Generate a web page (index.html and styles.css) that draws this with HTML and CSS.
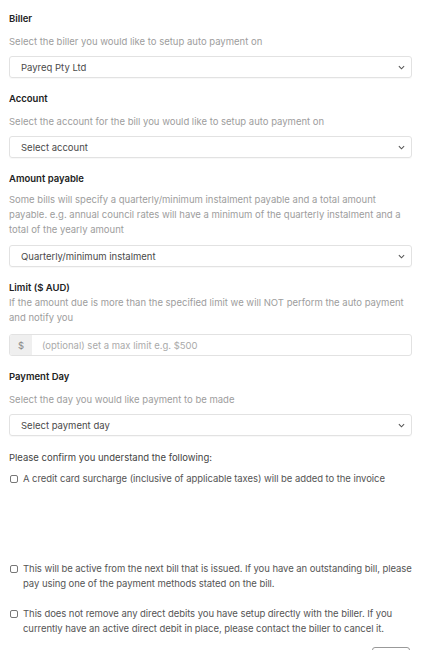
FILE: index.html
```html
<!DOCTYPE html>
<html>
<head>
<meta charset="utf-8">
<link rel="stylesheet" href="styles.css">
</head>
<body>
<form class="form">
  <div class="field">
    <div class="label">Biller</div>
    <div class="desc">Select the biller you would like to setup auto payment on</div>
    <div class="select"><span>Payreq Pty Ltd</span><svg class="chev" viewBox="0 0 8 5" width="7" height="5"><path d="M1 1l3 3 3-3" fill="none" stroke="#555" stroke-width="1.2"/></svg></div>
  </div>
  <div class="field">
    <div class="label">Account</div>
    <div class="desc">Select the account for the bill you would like to setup auto payment on</div>
    <div class="select"><span>Select account</span><svg class="chev" viewBox="0 0 8 5" width="7" height="5"><path d="M1 1l3 3 3-3" fill="none" stroke="#555" stroke-width="1.2"/></svg></div>
  </div>
  <div class="field">
    <div class="label">Amount payable</div>
    <div class="desc">Some bills will specify a quarterly/minimum instalment payable and a total amount payable. e.g. annual council rates will have a minimum of the quarterly instalment and a total of the yearly amount</div>
    <div class="select"><span>Quarterly/minimum instalment</span><svg class="chev" viewBox="0 0 8 5" width="7" height="5"><path d="M1 1l3 3 3-3" fill="none" stroke="#555" stroke-width="1.2"/></svg></div>
  </div>
  <div class="field">
    <div class="label">Limit ($ AUD)</div>
    <div class="desc tight">If the amount due is more than the specified limit we will NOT perform the auto payment and notify you</div>
    <div class="input-group"><span class="addon">$</span><span class="input placeholder">(optional) set a max limit e.g. $500</span></div>
  </div>
  <div class="field">
    <div class="label">Payment Day</div>
    <div class="desc">Select the day you would like payment to be made</div>
    <div class="select"><span>Select payment day</span><svg class="chev" viewBox="0 0 8 5" width="7" height="5"><path d="M1 1l3 3 3-3" fill="none" stroke="#555" stroke-width="1.2"/></svg></div>
  </div>
  <div class="confirm">Please confirm you understand the following:</div>
  <label class="check first"><span class="box"></span><span>A credit card surcharge (inclusive of applicable taxes) will be added to the invoice</span></label>
  <div class="spacer"></div>
  <label class="check"><span class="box"></span><span>This will be active from the next bill that is issued. If you have an outstanding bill, please pay using one of the payment methods stated on the bill.</span></label>
  <label class="check"><span class="box"></span><span>This does not remove any direct debits you have setup directly with the biller. If you currently have an active direct debit in place, please contact the biller to cancel it.</span></label>
  <div class="actions"><span class="btn"></span></div>
</form>
</body>
</html>
```
FILE: styles.css
```css
* { box-sizing: border-box; }
html, body { margin: 0; padding: 0; background: #fff; }
body {
  font-family: Inter, "Noto Sans", "Liberation Sans", sans-serif;
  font-size: 9.5px;
  color: #333;
  letter-spacing: 0;
}
.form {
  padding: 11px 18px 0 9px;
  width: 430px;
}
.field { margin-bottom: 13px; }
.label {
  font-weight: 600;
  color: #222;
  line-height: 15px;
  margin-bottom: 8px;
}
.desc {
  color: #9d9d9d;
  line-height: 15px;
  margin-bottom: 7px;
}
.field:nth-child(3) .label { margin-bottom: 6px; }
.field:nth-child(3) .desc { margin-bottom: 8px; }
.desc.tight { margin-bottom: 9px; }
.field:nth-child(4) .label { margin-bottom: 0; }
.select {
  height: 22px;
  border: 1px solid #e2e2e2;
  border-radius: 3px;
  display: flex;
  align-items: center;
  justify-content: space-between;
  padding: 0 6px 0 11px;
  color: #4a4a4a;
  box-shadow: 0 1px 1px rgba(0,0,0,0.03);
}
.chev { display: block; }
.input-group {
  height: 22px;
  display: flex;
  border: 1px solid #e2e2e2;
  border-radius: 3px;
  overflow: hidden;
}
.addon {
  width: 22px;
  background: #efefef;
  color: #888;
  display: flex;
  align-items: center;
  justify-content: center;
}
.input {
  flex: 1;
  display: flex;
  align-items: center;
  padding-left: 10px;
}
.placeholder { color: #aaa; }
.confirm {
  line-height: 15px;
  color: #444;
  margin-top: 14px;
  margin-bottom: 6px;
}
.check {
  display: flex;
  gap: 5px;
  line-height: 15px;
  color: #555;
  margin-bottom: 15px;
  padding-left: 1px;
  letter-spacing: -0.06px;
}
.check.first { margin-bottom: 0; }
.box {
  flex: none;
  width: 8px;
  height: 8px;
  border: 1px solid #777;
  border-radius: 2px;
  margin-top: 3.5px;
}
.spacer { height: 75px; }
.actions {
  display: flex;
  justify-content: flex-end;
  padding-right: 2px;
  margin-top: -4px;
}
.btn {
  width: 38px;
  height: 20px;
  border: 1px solid #999;
  border-radius: 3px;
}
```
